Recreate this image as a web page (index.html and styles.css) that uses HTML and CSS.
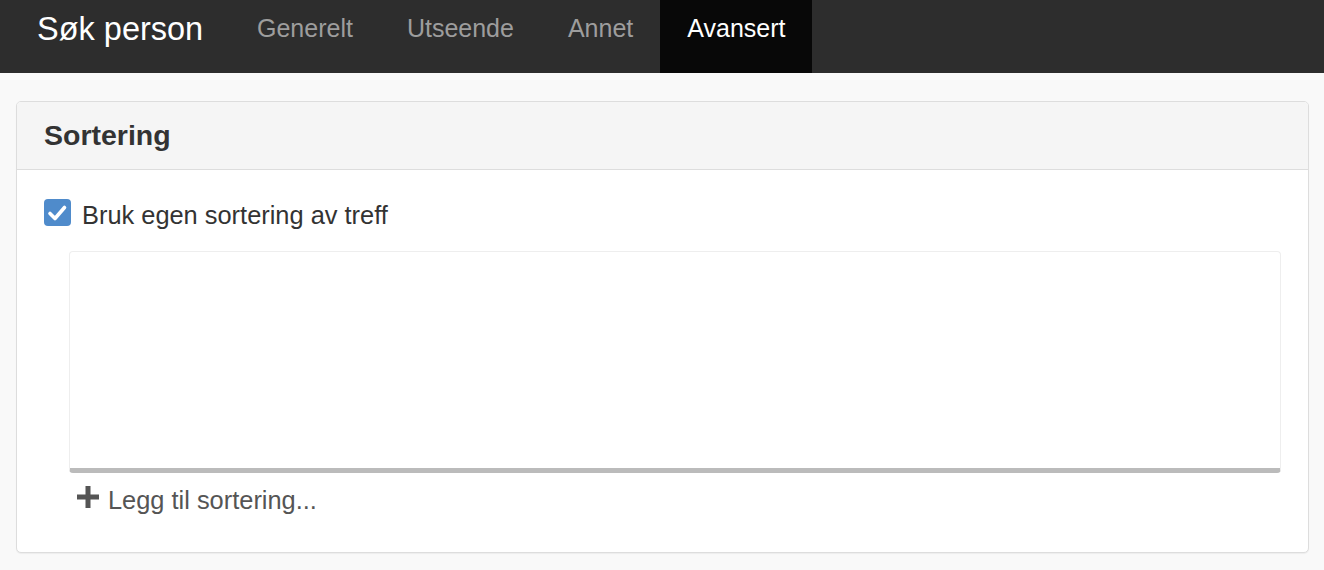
FILE: index.html
```html
<!DOCTYPE html>
<html lang="no">
<head>
<meta charset="utf-8">
<title>Søk person</title>
<link rel="stylesheet" href="styles.css">
</head>
<body>
<nav class="navbar">
  <div class="brand">Søk person</div>
  <ul class="nav">
    <li><a class="nav-link">Generelt</a></li>
    <li><a class="nav-link">Utseende</a></li>
    <li><a class="nav-link">Annet</a></li>
    <li><a class="nav-link active">Avansert</a></li>
  </ul>
</nav>
<main class="page">
  <section class="panel">
    <header class="panel-heading">
      <h3 class="panel-title">Sortering</h3>
    </header>
    <div class="panel-body">
      <label class="check">
        <span class="check-box">
          <svg width="27" height="27" viewBox="0 0 27 27"><path d="M6 14.5 L11 19.5 L20.5 8.5" fill="none" stroke="#fff" stroke-width="3.6" stroke-linecap="round" stroke-linejoin="round"/></svg>
        </span>
        <span class="check-text">Bruk egen sortering av treff</span>
      </label>
      <div class="sort-list"></div>
      <a class="add-link">
        <svg class="plus" width="22" height="22" viewBox="0 0 22 22"><rect x="8.5" y="0" width="5" height="22" fill="#555"/><rect x="0" y="8.5" width="22" height="5" fill="#555"/></svg>
        <span class="add-text">Legg til sortering...</span>
      </a>
    </div>
  </section>
</main>
</body>
</html>
```
FILE: styles.css
```css
* { box-sizing: border-box; }
html, body { margin: 0; padding: 0; }
body {
  background: #f9f9f9;
  font-family: "Liberation Sans", Arial, Helvetica, sans-serif;
  color: #333;
}
.navbar {
  display: flex;
  align-items: stretch;
  height: 73px;
  background: #2d2d2d;
}
.brand {
  width: 230px;
  padding: 13px 0 0 37px;
  font-size: 32.5px;
  line-height: 33px;
  color: #fff;
}
.nav {
  display: flex;
  list-style: none;
  margin: 0;
  padding: 0;
}
.nav li { display: flex; }
.nav-link {
  display: block;
  padding: 16px 27px 0 27px;
  font-size: 25px;
  line-height: 25px;
  color: #9d9d9d;
}
.nav-link.active {
  background: #080808;
  color: #fff;
}
.page {
  padding: 28px 15px 18px 16px;
}
.panel {
  background: #fff;
  border: 1px solid #dddddd;
  border-radius: 5px;
  box-shadow: 0 1px 1px rgba(0,0,0,0.05);
}
.panel-heading {
  background: #f5f5f5;
  border-bottom: 1px solid #dddddd;
  border-radius: 4px 4px 0 0;
  padding: 17px 27px 18px 27px;
}
.panel-title {
  margin: 0;
  font-size: 28.5px;
  line-height: 32px;
  font-weight: bold;
  color: #333;
}
.panel-body {
  padding: 29px 27px 39px 27px;
}
.check {
  display: flex;
  align-items: flex-start;
  gap: 11px;
}
.check-box {
  display: block;
  width: 27px;
  height: 27px;
  border-radius: 4px;
  background: #4f8bcb;
}
.check-box svg { display: block; }
.check-text {
  padding-top: 3px;
  font-size: 25.4px;
  line-height: 27px;
  color: #333;
}
.sort-list {
  margin: 22px 0 0 25px;
  height: 222px;
  background: #fff;
  border: 1px solid #eeeeee;
  border-bottom: 5px solid #bbbbbb;
  border-radius: 4px;
}
.add-link {
  display: flex;
  align-items: flex-start;
  gap: 9px;
  margin: 13px 0 0 33px;
  color: #555;
}
.plus { display: block; flex: none; }
.add-text {
  margin-top: 2px;
  font-size: 25.4px;
  line-height: 25px;
}
```
